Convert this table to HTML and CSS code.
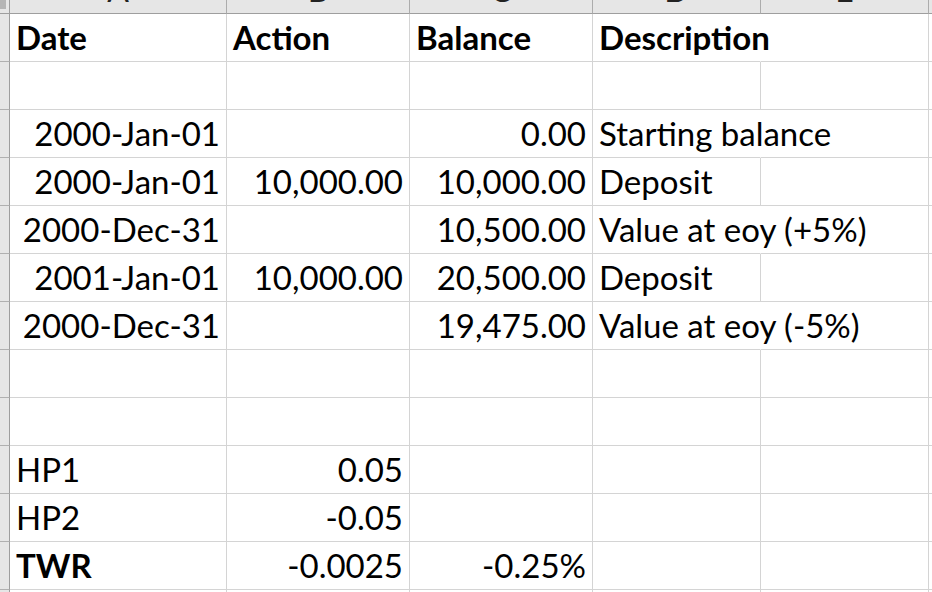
FILE: index.html
```html
<!DOCTYPE html>
<html>
<head>
<meta charset="utf-8">
<link rel="stylesheet" href="styles.css">
</head>
<body>
<div class="sheet">
  <div class="corner"><div class="corner-mark"></div></div>
  <div class="colhead"><span>A</span></div>
  <div class="colhead"><span>B</span></div>
  <div class="colhead"><span>C</span></div>
  <div class="colhead"><span>D</span></div>
  <div class="colhead"><span>E</span></div>
  <div class="colhead last"></div>

  <div class="rowhead"></div>
  <div class="cell b">Date</div>
  <div class="cell b">Action</div>
  <div class="cell b">Balance</div>
  <div class="cell b spill">Description</div>
  <div class="cell"></div>
  <div class="cell"></div>

  <div class="rowhead"></div>
  <div class="cell"></div><div class="cell"></div><div class="cell"></div><div class="cell"></div><div class="cell"></div><div class="cell"></div>

  <div class="rowhead"></div>
  <div class="cell r">2000-Jan-01</div>
  <div class="cell"></div>
  <div class="cell r">0.00</div>
  <div class="cell spill">Starting balance</div>
  <div class="cell"></div><div class="cell"></div>

  <div class="rowhead"></div>
  <div class="cell r">2000-Jan-01</div>
  <div class="cell r">10,000.00</div>
  <div class="cell r">10,000.00</div>
  <div class="cell">Deposit</div>
  <div class="cell"></div><div class="cell"></div>

  <div class="rowhead"></div>
  <div class="cell r">2000-Dec-31</div>
  <div class="cell"></div>
  <div class="cell r">10,500.00</div>
  <div class="cell spill">Value at eoy (+5%)</div>
  <div class="cell"></div><div class="cell"></div>

  <div class="rowhead"></div>
  <div class="cell r">2001-Jan-01</div>
  <div class="cell r">10,000.00</div>
  <div class="cell r">20,500.00</div>
  <div class="cell">Deposit</div>
  <div class="cell"></div><div class="cell"></div>

  <div class="rowhead"></div>
  <div class="cell r">2000-Dec-31</div>
  <div class="cell"></div>
  <div class="cell r">19,475.00</div>
  <div class="cell spill">Value at eoy (-5%)</div>
  <div class="cell"></div><div class="cell"></div>

  <div class="rowhead"></div>
  <div class="cell"></div><div class="cell"></div><div class="cell"></div><div class="cell"></div><div class="cell"></div><div class="cell"></div>

  <div class="rowhead"></div>
  <div class="cell"></div><div class="cell"></div><div class="cell"></div><div class="cell"></div><div class="cell"></div><div class="cell"></div>

  <div class="rowhead"></div>
  <div class="cell">HP1</div>
  <div class="cell r">0.05</div>
  <div class="cell"></div><div class="cell"></div><div class="cell"></div><div class="cell"></div>

  <div class="rowhead"></div>
  <div class="cell">HP2</div>
  <div class="cell r">-0.05</div>
  <div class="cell"></div><div class="cell"></div><div class="cell"></div><div class="cell"></div>

  <div class="rowhead"></div>
  <div class="cell b">TWR</div>
  <div class="cell r">-0.0025</div>
  <div class="cell r">-0.25%</div>
  <div class="cell"></div><div class="cell"></div><div class="cell"></div>

  <div class="rowhead"></div>
  <div class="cell"></div><div class="cell"></div><div class="cell"></div><div class="cell"></div><div class="cell"></div><div class="cell"></div>
</div>
</body>
</html>
```

FILE: styles.css
```css
html, body {
  margin: 0;
  padding: 0;
  background: #ffffff;
  overflow: hidden;
}

.sheet {
  width: 932px;
  height: 592px;
  display: grid;
  grid-template-columns: 10px 217px 183px 183px 168px 168px 1fr;
  grid-template-rows: 14px repeat(12, 48px) 1fr;
  font-family: Lato, "Liberation Sans", sans-serif;
  font-size: 33px;
  color: #000;
  overflow: hidden;
}

.corner {
  background: #e6e6e6;
  border-right: 1px solid #9e9e9e;
  border-bottom: 1px solid #9e9e9e;
  box-sizing: border-box;
}

.corner-mark {
  width: 6px;
  height: 9px;
  background: #b5b5b5;
}

.colhead {
  background: #e6e6e6;
  border-right: 1px solid #acacac;
  border-bottom: 1px solid #9e9e9e;
  box-sizing: border-box;
  overflow: hidden;
  display: flex;
  justify-content: center;
  align-items: flex-end;
}

.colhead span {
  line-height: 1;
  font-size: 32px;
  margin-bottom: 7px;
  color: #222;
}

.colhead.last {
  border-right: none;
}

.rowhead {
  background: #e6e6e6;
  border-right: 1px solid #9e9e9e;
  border-bottom: 1px solid #b0b0b0;
  box-sizing: border-box;
}

.cell {
  border-right: 1px solid #d4d4d4;
  border-bottom: 1px solid #d4d4d4;
  box-sizing: border-box;
  display: flex;
  align-items: flex-end;
  justify-content: flex-start;
  padding: 0 6px 7px 6px;
  line-height: 1;
  white-space: nowrap;
  min-width: 0;
}

.cell.r {
  justify-content: flex-end;
}

.cell.b {
  font-weight: bold;
}

.cell.spill {
  border-right-color: transparent;
}
```
